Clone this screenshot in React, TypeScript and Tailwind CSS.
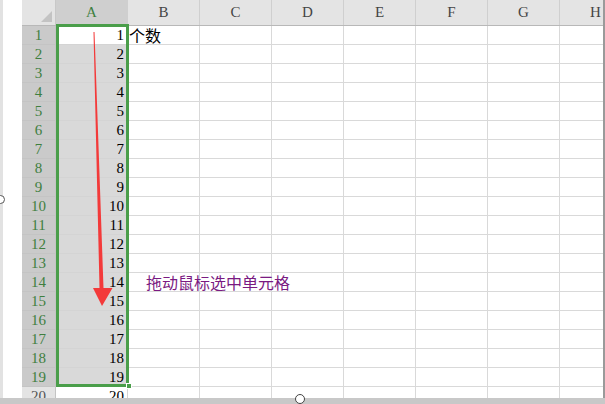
import React from 'react';

const cols = ['A', 'B', 'C', 'D', 'E', 'F', 'G', 'H'];
const rows = Array.from({ length: 20 }, (_, i) => i + 1);

const serif = { fontFamily: '"Liberation Serif", "Noto Sans CJK SC", serif' };
const cjk = { fontFamily: '"Noto Sans CJK SC", "Liberation Sans", sans-serif' };

function ColHeader() {
  return (
    <div className="flex h-[26px] bg-[#e4e4e4] border-b border-[#b8b8b8]">
      <div className="relative w-[34px] shrink-0 border-r border-[#c8c8c8]">
        <div className="absolute right-[3px] bottom-[3px] w-0 h-0 border-l-[11px] border-l-transparent border-b-[11px] border-b-[#c3c3c3]" />
      </div>
      {cols.map((c) => (
        <div
          key={c}
          style={serif}
          className={`w-[72px] shrink-0 flex items-center justify-center text-[15px] border-r border-[#cfcfcf] ${
            c === 'A' ? 'bg-[#cfcfcf] text-[#3f7f3f]' : 'text-[#444]'
          }`}
        >
          {c}
        </div>
      ))}
    </div>
  );
}

function Row({ n }: { n: number }) {
  const sel = n <= 19;
  return (
    <div className="flex h-[19px] shrink-0 bg-white">
      <div
        style={serif}
        className={`w-[34px] shrink-0 flex items-center justify-center text-[15px] border-r border-b border-[#c4c4c4] ${
          sel ? 'bg-[#cacaca] text-[#3f7f3f]' : 'bg-[#e4e4e4] text-[#555]'
        }`}
      >
        {n}
      </div>
      <div
        style={serif}
        className={`w-[72px] shrink-0 flex items-center justify-end pr-[3px] text-[15px] text-black border-r border-b border-[#d4d4d4] ${
          sel && n !== 1 ? 'bg-[#d9d9d9]' : 'bg-white'
        }`}
      >
        {n}
      </div>
      {cols.slice(1).map((c) => (
        <div
          key={c}
          className="relative w-[72px] shrink-0 flex items-center border-r border-b border-[#d9d9d9]"
        >
          {c === 'B' && n === 1 && (
            <span style={cjk} className="text-[16px] leading-none text-black pl-[1px]">
              个数
            </span>
          )}
          {c === 'B' && n === 14 && (
            <span style={cjk} className="relative z-10 text-[16px] leading-none text-[#7a1a82] pl-[18px] whitespace-nowrap">
              拖动鼠标选中单元格
            </span>
          )}
        </div>
      ))}
    </div>
  );
}

export default function App() {
  return (
    <div className="w-[605px] h-[404px] overflow-hidden bg-white flex flex-col">
      <div className="flex h-[398px]">
        {/* window edge */}
        <div className="relative w-[22px] shrink-0 bg-white border-l-[3px] border-[#e2e2e2]">
          <div className="absolute -left-[7px] top-[195px] w-[9px] h-[9px] rounded-full border border-[#555] bg-white" />
        </div>

        {/* sheet */}
        <div className="relative flex-1 overflow-hidden border-r-2 border-[#9a9a9a]">
          <ColHeader />
          {rows.map((n) => (
            <Row key={n} n={n} />
          ))}

          {/* selection border */}
          <div className="absolute left-[34px] top-[24px] w-[73px] h-[363px] border-[3px] border-[#4a9e4a] pointer-events-none" />
          <div className="absolute left-[104px] top-[383px] w-[6px] h-[6px] bg-[#4a9e4a] border border-white" />

          {/* drag arrow */}
          <svg className="absolute left-0 top-0" width="200" height="320" viewBox="0 0 200 320">
            <polygon
              points="71.5,32 72.5,32 81.5,288 90.5,288 80,306 71,288 77.5,288"
              fill="#f33a3a"
            />
          </svg>
        </div>
      </div>
      <div className="relative h-[6px] bg-[#c8c8c8]">
        <div className="absolute left-[295px] -top-[4px] w-[10px] h-[10px] rounded-full border border-[#444] bg-white" />
      </div>
    </div>
  );
}
